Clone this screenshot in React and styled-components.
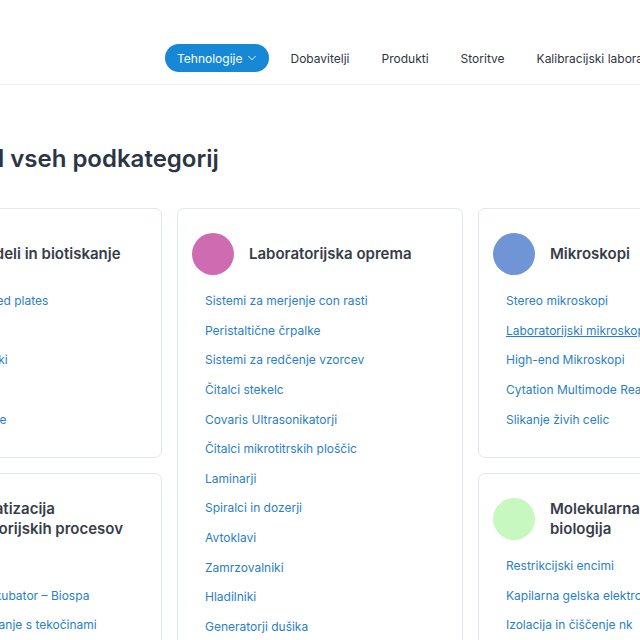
import React from "react";
import styled, { createGlobalStyle } from "styled-components";
import { ChevronDown } from "lucide-react";

const Global = createGlobalStyle`
  html, body {
    margin: 0;
    padding: 0;
    background: #ffffff;
    overflow: hidden;
  }
  body {
    font-family: Inter, "Noto Sans", "Liberation Sans", sans-serif;
    color: #2b3544;
  }
`;

const Header = styled.header`
  height: 85px;
  border-bottom: 1px solid #eceff3;
  display: flex;
  align-items: flex-start;
  padding: 44px 0 0 165px;
  box-sizing: border-box;
`;

const Nav = styled.nav`
  display: flex;
  align-items: center;
  gap: 10px;
  white-space: nowrap;
`;

const NavItem = styled.a`
  display: flex;
  align-items: center;
  gap: 3px;
  height: 28px;
  padding: 0 ${(p) => (p.$active ? "10px 0 12px" : "11px")};
  border-radius: 14px;
  font-size: 12px;
  text-decoration: none;
  background: ${(p) => (p.$active ? "#1688d6" : "transparent")};
  color: ${(p) => (p.$active ? "#ffffff" : "#2f3640")};
`;

const Content = styled.main`
  margin-left: -124px;
  width: 1200px;
`;

const Heading = styled.h1`
  margin: 59px 0 35px 39px;
  font-size: 24px;
  line-height: 29px;
  font-weight: 600;
  color: #2b3544;
`;

const Columns = styled.div`
  display: flex;
  align-items: flex-start;
  gap: 15px;
`;

const Column = styled.div`
  width: 286px;
  display: flex;
  flex-direction: column;
  gap: 15px;
`;

const Card = styled.section`
  border: 1px solid #dfe7ef;
  border-radius: 7px;
  padding: 24px 14px 23px;
  background: #fff;
`;

const CardHead = styled.div`
  display: flex;
  align-items: center;
  gap: 15px;
  min-height: 42px;
`;

const Dot = styled.span`
  flex: 0 0 42px;
  width: 42px;
  height: 42px;
  border-radius: 50%;
  background: ${(p) => p.$color};
`;

const CardTitle = styled.h2`
  margin: 0;
  font-size: 15px;
  line-height: 20px;
  font-weight: 600;
  color: #363d48;
  white-space: pre-line;
`;

const List = styled.ul`
  list-style: none;
  margin: 11px 0 0;
  padding: 0 0 0 13px;
`;

const Item = styled.li`
  height: 29.6px;
  display: flex;
  align-items: center;
  white-space: nowrap;
`;

const Link = styled.a`
  font-size: 12px;
  color: #2a80c6;
  text-decoration: ${(p) => (p.$hover ? "underline" : "none")};
`;

const columns = [
  [
    {
      title: "3D modeli in biotiskanje",
      color: "#8fc3e8",
      links: [
        "Hydrogel-modified plates",
        "Bioprinterji",
        "Tkivni biotiskalniki",
        "Hidrogeli",
        "3D celične kulture",
      ],
    },
    {
      title: "Avtomatizacija\nlaboratorijskih procesov",
      color: "#f2b36b",
      links: [
        "Roboti",
        "Avtomatiziran inkubator – Biospa",
        "Avtomatsko ravnanje s tekočinami",
      ],
    },
  ],
  [
    {
      title: "Laboratorijska oprema",
      color: "#cf6bb1",
      links: [
        "Sistemi za merjenje con rasti",
        "Peristaltične črpalke",
        "Sistemi za redčenje vzorcev",
        "Čitalci stekelc",
        "Covaris Ultrasonikatorji",
        "Čitalci mikrotitrskih ploščic",
        "Laminarji",
        "Spiralci in dozerji",
        "Avtoklavi",
        "Zamrzovalniki",
        "Hladilniki",
        "Generatorji dušika",
        "Inkubatorji",
        "Centrifuge",
      ],
    },
  ],
  [
    {
      title: "Mikroskopi",
      color: "#7095d6",
      links: [
        "Stereo mikroskopi",
        "Laboratorijski mikroskopi",
        "High-end Mikroskopi",
        "Cytation Multimode Readers",
        "Slikanje živih celic",
      ],
      hover: 1,
    },
    {
      title: "Molekularna\nbiologija",
      color: "#c6f8bf",
      links: [
        "Restrikcijski encimi",
        "Kapilarna gelska elektroforeza",
        "Izolacija in čiščenje nk",
      ],
    },
  ],
];

export default function App() {
  return (
    <>
      <Global />
      <Header>
        <Nav>
          <NavItem $active href="#">
            Tehnologije <ChevronDown size={14} strokeWidth={1.6} />
          </NavItem>
          <NavItem href="#">Dobavitelji</NavItem>
          <NavItem href="#">Produkti</NavItem>
          <NavItem href="#">Storitve</NavItem>
          <NavItem href="#">Kalibracijski laboratorij</NavItem>
        </Nav>
      </Header>
      <Content>
        <Heading>Pregled vseh podkategorij</Heading>
        <Columns>
          {columns.map((col, ci) => (
            <Column key={ci}>
              {col.map((card) => (
                <Card key={card.title}>
                  <CardHead>
                    <Dot $color={card.color} />
                    <CardTitle>{card.title}</CardTitle>
                  </CardHead>
                  <List>
                    {card.links.map((l, i) => (
                      <Item key={l}>
                        <Link href="#" $hover={card.hover === i}>
                          {l}
                        </Link>
                      </Item>
                    ))}
                  </List>
                </Card>
              ))}
            </Column>
          ))}
        </Columns>
      </Content>
    </>
  );
}
